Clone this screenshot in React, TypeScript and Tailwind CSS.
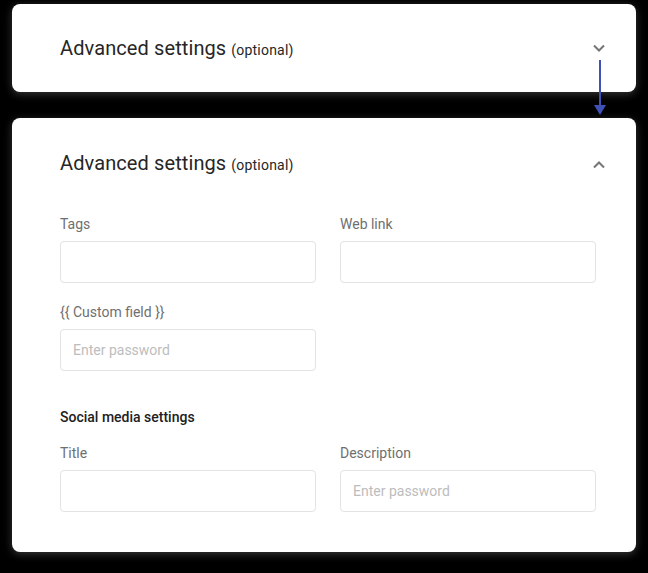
import React from "react";

function Chevron({ up }: { up?: boolean }) {
  return (
    <svg width="14" height="9" viewBox="0 0 14 9" className="block">
      <path
        d={up ? "M2 7.5 L7 2.5 L12 7.5" : "M2 1.5 L7 6.5 L12 1.5"}
        fill="none"
        stroke="#757575"
        strokeWidth="2"
      />
    </svg>
  );
}

function Title() {
  return (
    <div className="text-[20px] leading-[28px] text-[#262626] tracking-[0.1px]">
      Advanced settings <span className="text-[14px] tracking-[0.2px] text-[#262626]">(optional)</span>
    </div>
  );
}

function Field({ label, placeholder }: { label: string; placeholder?: string }) {
  return (
    <div className="flex flex-col pt-[1px]">
      <div className="text-[14px] leading-[20px] text-[#6f6f6f]">{label}</div>
      <div className="mt-[7px] h-[42px] rounded-[4px] border border-[#e3e3e3] flex items-center px-3 text-[14px] text-[#bdbdbd]">
        {placeholder}
      </div>
    </div>
  );
}

export default function App() {
  return (
    <div
      className="relative w-[648px] h-[573px] bg-black pt-[4px] px-[12px]"
      style={{ fontFamily: "Roboto, 'Noto Sans', sans-serif" }}
    >
      <div className="h-[88px] pt-[1px] bg-white rounded-[8px] shadow-[0_2px_8px_rgba(255,255,255,0.22)] flex items-center justify-between pl-[48px] pr-[30px]">
        <Title />
        <Chevron />
      </div>

      <div className="mt-[26px] h-[434px] bg-white rounded-[8px] shadow-[0_2px_8px_rgba(255,255,255,0.22)] pl-[48px] pr-[40px]">
        <div className="h-[92px] flex items-center justify-between -mr-[10px]">
          <Title />
          <Chevron up />
        </div>
        <div className="pt-[3px] grid grid-cols-2 gap-x-6">
          <Field label="Tags" />
          <Field label="Web link" />
        </div>
        <div className="mt-[18px] grid grid-cols-2 gap-x-6">
          <Field label="{{ Custom field }}" placeholder="Enter password" />
        </div>
        <div className="mt-[36px] text-[14px] leading-[20px] font-medium text-[#212121]">
          Social media settings
        </div>
        <div className="mt-[15px] grid grid-cols-2 gap-x-6">
          <Field label="Title" />
          <Field label="Description" placeholder="Enter password" />
        </div>
      </div>

      <svg
        className="absolute left-[593px] top-[60px]"
        width="14"
        height="56"
        viewBox="0 0 14 56"
      >
        <line x1="7" y1="0" x2="7" y2="46" stroke="#3f51b5" strokeWidth="2" />
        <path d="M1 45 L13 45 L7 55 Z" fill="#3f51b5" />
      </svg>
    </div>
  );
}
